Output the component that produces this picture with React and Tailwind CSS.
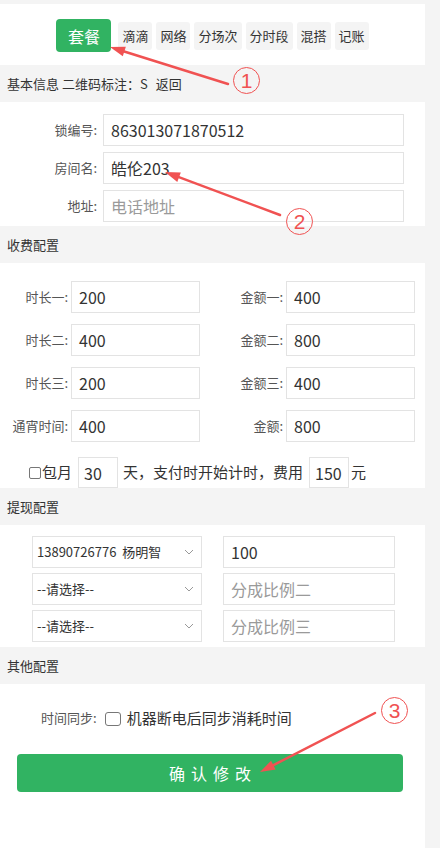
import React from 'react';

const tabs = ['滴滴', '网络', '分场次', '分时段', '混搭', '记账'];

const feeRows = [
  ['时长一:', '200', '金额一:', '400'],
  ['时长二:', '400', '金额二:', '800'],
  ['时长三:', '200', '金额三:', '400'],
  ['通宵时间:', '400', '金额:', '800'],
];

const splitRows = [
  ['13890726776  杨明智', '100', ''],
  ['--请选择--', '', '分成比例二'],
  ['--请选择--', '', '分成比例三'],
];

// arrows drawn over the page: [tailX, tailY, tipX, tipY]
const arrows = [
  [228, 84, 110, 47],
  [280, 215, 165, 172],
  [375, 713, 260, 772],
];

const marks = [
  { n: '1', x: 233, y: 67 },
  { n: '2', x: 286, y: 208 },
  { n: '3', x: 381, y: 697 },
];

const head = (x1, y1, x2, y2) => {
  const dx = x2 - x1;
  const dy = y2 - y1;
  const len = Math.sqrt(dx * dx + dy * dy);
  const ux = dx / len;
  const uy = dy / len;
  const bx = x2 - ux * 15;
  const by = y2 - uy * 15;
  const px = -uy * 5;
  const py = ux * 5;
  return `${x2},${y2} ${bx + px},${by + py} ${bx - px},${by - py}`;
};

const SectionHeader = ({ children }) => (
  <div className="h-[37px] bg-[#f4f4f4] px-[7px] flex items-center text-[13px] text-[#333]">
    {children}
  </div>
);

const Field = ({ value, placeholder, className = '' }) => (
  <div
    className={`h-[32px] border border-[#e3e3e3] bg-white px-[7px] flex items-center text-[16px] ${
      value ? 'text-[#333]' : 'text-[#9a9a9a]'
    } ${className}`}
  >
    {value || placeholder}
  </div>
);

const Chevron = () => (
  <svg width="10" height="6" viewBox="0 0 10 6" fill="none">
    <path d="M1 1l4 4 4-4" stroke="#999" strokeWidth="1" />
  </svg>
);

export default function App() {
  return (
    <div className="relative w-[440px] h-[848px] overflow-hidden bg-[#f4f4f4] font-['Noto_Sans_CJK_SC',sans-serif]">
      <div className="mt-[4px] w-[425px] h-[844px] bg-white flex flex-col">
        {/* tabs */}
        <div className="h-[61px] pt-[15px] flex items-start justify-center gap-[4px]">
          <button className="w-[55px] h-[33px] mr-[3px] rounded-[4px] bg-[#31b362] text-white text-[16px]">
            套餐
          </button>
          {tabs.map((t) => (
            <div
              key={t}
              className="mt-[3px] h-[28px] px-[4px] rounded-[3px] bg-[#f4f4f4] text-[13px] text-[#333] flex items-center"
            >
              {t}
            </div>
          ))}
        </div>

        <SectionHeader>
          <span>基本信息 二维码标注：S</span>
          <span className="ml-[8px]">返回</span>
        </SectionHeader>

        <div className="pt-[12px] pb-[4px] flex flex-col gap-[6px]">
          {[
            ['锁编号:', '863013071870512', ''],
            ['房间名:', '皓伦203', ''],
            ['地址:', '', '电话地址'],
          ].map(([label, value, ph]) => (
            <div key={label} className="flex items-center">
              <div className="w-[97px] text-right text-[13px] text-[#555]">{label}</div>
              <Field value={value} placeholder={ph} className="ml-[6px] w-[301px]" />
            </div>
          ))}
        </div>

        <SectionHeader>收费配置</SectionHeader>

        <div className="pt-[18px] flex flex-col gap-[11px]">
          {feeRows.map(([l1, v1, l2, v2]) => (
            <div key={l1} className="flex items-center">
              <div className="w-[68px] text-right text-[13px] text-[#555]">{l1}</div>
              <Field value={v1} className="ml-[3px] w-[129px]" />
              <div className="w-[83px] text-right text-[13px] text-[#555]">{l2}</div>
              <Field value={v2} className="ml-[3px] w-[129px]" />
            </div>
          ))}
        </div>

        <div className="mt-[15px] h-[31px] pl-[29px] flex items-center text-[15px] text-[#333]">
          <span className="w-[12px] h-[12px] border border-[#777] rounded-[2px]" />
          <span className="ml-[1px]">包月</span>
          <div className="ml-[6px] w-[40px] h-[31px] border border-[#e3e3e3] px-[5px] flex items-center text-[16px]">
            30
          </div>
          <span className="ml-[5px]">天，支付时开始计时，费用</span>
          <div className="ml-[6px] w-[40px] h-[31px] border border-[#e3e3e3] px-[5px] flex items-center text-[16px]">
            150
          </div>
          <span className="ml-[2px]">元</span>
        </div>

        <SectionHeader>提现配置</SectionHeader>

        <div className="pt-[11px] pb-[5px] flex flex-col gap-[5px]">
          {splitRows.map(([sel, v, ph], i) => (
            <div key={i} className="flex items-center pl-[32px]">
              <div className="w-[170px] h-[32px] border border-[#e3e3e3] px-[4px] flex items-center justify-between text-[13px] text-[#333]">
                <span className="whitespace-pre">{sel}</span>
                <span className="mr-[3px]">
                  <Chevron />
                </span>
              </div>
              <Field value={v} placeholder={ph} className="ml-[21px] w-[172px]" />
            </div>
          ))}
        </div>

        <SectionHeader>其他配置</SectionHeader>

        <div className="pt-[26px] pl-[41px] flex items-start">
          <span className="text-[13px] text-[#555] leading-[16px]">时间同步:</span>
          <span className="ml-[8px] mt-[2px] w-[16px] h-[14px] border border-[#777] rounded-[3px]" />
          <span className="ml-[6px] text-[15px] text-[#333] leading-[18px] mt-[-1px]">机器断电后同步消耗时间</span>
        </div>

        <div className="mt-[27px] px-[17px] pr-[22px]">
          <button className="w-full h-[38px] rounded-[4px] bg-[#31b362] text-white text-[16px] tracking-[6px] pl-[6px]">
            确认修改
          </button>
        </div>
      </div>

      {/* annotations */}
      <svg className="absolute left-0 top-0 pointer-events-none" width="440" height="848">
        {arrows.map(([x1, y1, x2, y2], i) => (
          <g key={i}>
            <line x1={x1} y1={y1} x2={x2 + (x1 - x2) * 0.08} y2={y2 + (y1 - y2) * 0.08} stroke="#f05252" strokeWidth="2.5" strokeLinecap="round" />
            <polygon points={head(x1, y1, x2, y2)} fill="#f05252" />
          </g>
        ))}
      </svg>
      {marks.map((m) => (
        <div
          key={m.n}
          className="absolute w-[27px] h-[27px] rounded-full border-[1.5px] border-[#f05252] text-[#f05252] text-[21px] leading-none flex items-center justify-center font-['Liberation_Sans',sans-serif]"
          style={{ left: m.x, top: m.y }}
        >
          {m.n}
        </div>
      ))}
    </div>
  );
}
